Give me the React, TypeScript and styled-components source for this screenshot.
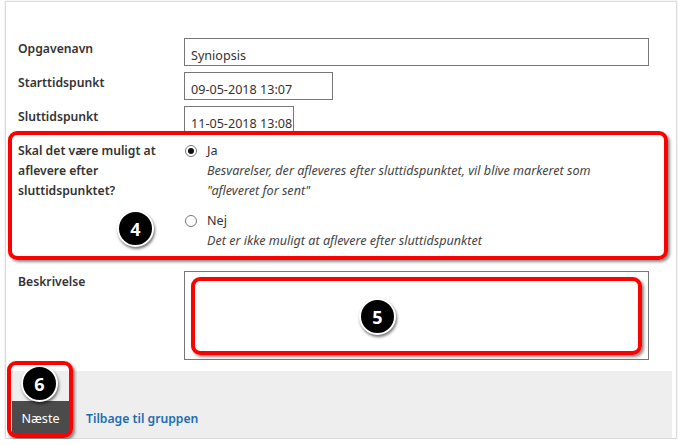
import styled, { createGlobalStyle } from "styled-components";

const GlobalStyle = createGlobalStyle`
  html, body {
    margin: 0;
    padding: 0;
    background: #fff;
  }
  body {
    font-family: "Noto Sans", "Open Sans", sans-serif;
    font-size: 12.6px;
    color: #333;
  }
`;

const Frame = styled.div`
  box-sizing: border-box;
  width: 672px;
  height: 438px;
  margin: 1px 0 0 5px;
  padding: 0 4px 0 2px;
  border: 1px solid #dadada;
  box-shadow: 0 0 2px rgba(0, 0, 0, 0.12);
  display: flex;
  flex-direction: column;
`;

const Form = styled.div`
  padding-top: 36px;
  display: flex;
  flex-direction: column;
`;

const Row = styled.div<{ $gap?: number }>`
  position: relative;
  display: grid;
  grid-template-columns: 176px 1fr;
  margin-top: ${(p) => p.$gap ?? 0}px;
`;

const Label = styled.div`
  padding: 1px 0 0 10px;
  font-weight: 600;
  font-size: 12.2px;
  line-height: 20px;
  color: #333;
`;

const Input = styled.div<{ $width: number }>`
  box-sizing: border-box;
  width: ${(p) => p.$width}px;
  height: 28px;
  padding: 7px 6px 0;
  border: 1px solid #777;
  line-height: 20px;
  color: #333;
  background: #fff;
  white-space: nowrap;
  overflow: hidden;
`;

const TextArea = styled.div`
  position: relative;
  box-sizing: border-box;
  width: 465px;
  height: 89px;
  border: 1px solid #777;
  background: #fff;
`;

const Options = styled.div`
  display: flex;
  flex-direction: column;
  gap: 10px;
  padding-top: 1px;
`;

const Option = styled.div``;

const OptionHead = styled.label`
  display: flex;
  align-items: center;
  gap: 10px;
  line-height: 20px;
  padding-left: 1px;
`;

const Radio = styled.span<{ $checked?: boolean }>`
  box-sizing: border-box;
  width: 12px;
  height: 12px;
  border-radius: 50%;
  border: 1px solid #777;
  background: #fff;
  display: flex;
  align-items: center;
  justify-content: center;
  &::after {
    content: "";
    width: 6px;
    height: 6px;
    border-radius: 50%;
    background: ${(p) => (p.$checked ? "#111" : "transparent")};
  }
`;

const OptionNote = styled.div`
  padding-left: 23px;
  font-style: italic;
  line-height: 20px;
  color: #444;
`;

const Callout = styled.div`
  position: absolute;
  box-sizing: border-box;
  border: 4px solid #ff0000;
  border-radius: 9px;
  box-shadow: 2px 2px 3px rgba(0, 0, 0, 0.45);
  pointer-events: none;
`;

const Badge = styled.div`
  position: absolute;
  box-sizing: border-box;
  width: 37px;
  height: 37px;
  border-radius: 50%;
  background: #000;
  border: 2px solid #fff;
  box-shadow: 1px 2px 3px rgba(0, 0, 0, 0.55);
  color: #fff;
  font-family: "Open Sans", "Noto Sans", sans-serif;
  font-weight: 700;
  font-size: 18px;
  display: flex;
  align-items: center;
  justify-content: center;
`;

const Footer = styled.div`
  position: relative;
  margin-top: 11px;
  height: 67px;
  background: #eeeeee;
  display: flex;
  align-items: flex-end;
  padding: 0 0 2px 4px;
`;

const NextButton = styled.button`
  height: 35px;
  width: 57px;
  border: none;
  background: #4b4b4b;
  color: #fff;
  font-family: inherit;
  font-size: 12.6px;
  padding: 0;
`;

const BackLink = styled.a`
  color: #1a6db3;
  font-weight: 600;
  font-size: 12.2px;
  text-decoration: none;
  line-height: 20px;
  margin: 0 0 7px 17px;
`;

export default function App() {
  return (
    <>
      <GlobalStyle />
      <Frame>
        <Form>
          <Row>
            <Label>Opgavenavn</Label>
            <Input $width={465}>Syniopsis</Input>
          </Row>
          <Row $gap={6}>
            <Label>Starttidspunkt</Label>
            <Input $width={149}>09-05-2018 13:07</Input>
          </Row>
          <Row $gap={6}>
            <Label>Sluttidspunkt</Label>
            <Input $width={110}>11-05-2018 13:08</Input>
          </Row>
          <Row $gap={6}>
            <Label>
              Skal det være muligt at
              <br />
              aflevere efter
              <br />
              sluttidspunktet?
            </Label>
            <Options>
              <Option>
                <OptionHead>
                  <Radio $checked />
                  Ja
                </OptionHead>
                <OptionNote>
                  Besvarelser, der afleveres efter sluttidspunktet, vil blive markeret som
                  <br />
                  "afleveret for sent"
                </OptionNote>
              </Option>
              <Option>
                <OptionHead>
                  <Radio />
                  Nej
                </OptionHead>
                <OptionNote>Det er ikke muligt at aflevere efter sluttidspunktet</OptionNote>
              </Option>
            </Options>
            <Callout style={{ left: 0, top: -9, width: 660, height: 129 }} />
            <Badge style={{ left: 109, top: 70 }}>4</Badge>
          </Row>
          <Row $gap={20}>
            <Label>Beskrivelse</Label>
            <TextArea>
              <Callout style={{ left: 6, top: 5, right: 6, bottom: 4 }} />
              <Badge style={{ left: 174, top: 26 }}>5</Badge>
            </TextArea>
          </Row>
        </Form>
        <Footer>
          <NextButton>Næste</NextButton>
          <BackLink href="#">Tilbage til gruppen</BackLink>
          <Callout style={{ left: -1, top: -10, width: 66, height: 77 }} />
          <Badge style={{ left: 13, top: -6 }}>6</Badge>
        </Footer>
      </Frame>
    </>
  );
}
